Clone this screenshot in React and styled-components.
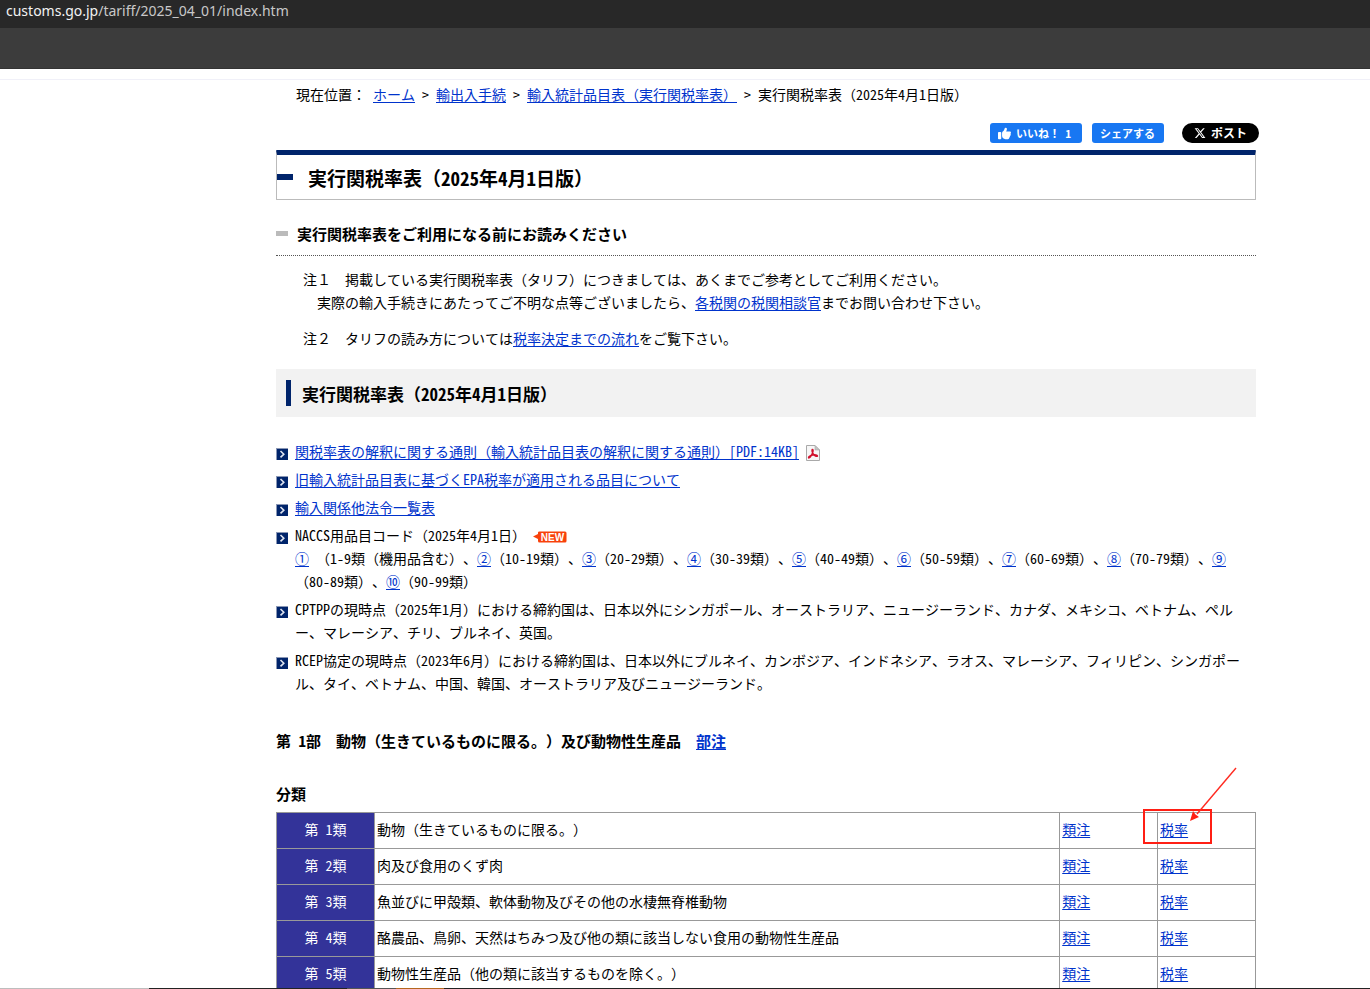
import styled, { createGlobalStyle } from "styled-components";
import { FaThumbsUp, FaXTwitter } from "react-icons/fa6";

const naccsCodes = [
  { mark: "②", range: "10-19類" },
  { mark: "③", range: "20-29類" },
  { mark: "④", range: "30-39類" },
  { mark: "⑤", range: "40-49類" },
  { mark: "⑥", range: "50-59類" },
  { mark: "⑦", range: "60-69類" },
  { mark: "⑧", range: "70-79類" },
  { mark: "⑨", range: "80-89類" },
];

const chapters = [
  { no: 1, name: "動物（生きているものに限る。）", marked: true },
  { no: 2, name: "肉及び食用のくず肉" },
  { no: 3, name: "魚並びに甲殻類、軟体動物及びその他の水棲無脊椎動物" },
  { no: 4, name: "酪農品、鳥卵、天然はちみつ及び他の類に該当しない食用の動物性生産品" },
  { no: 5, name: "動物性生産品（他の類に該当するものを除く。）" },
];

const ArrowBullet = () => (
  <BulletIcon viewBox="0 0 12 12" aria-hidden="true">
    <rect width="12" height="12" fill="#8a97b5" />
    <rect x="1" y="1" width="11" height="11" fill="#00246b" />
    <path d="M4.5 3 L7.8 6.2 L4.5 9.4" fill="none" stroke="#dfe4ef" strokeWidth="1.6" />
  </BulletIcon>
);

const PdfIcon = () => (
  <InlineIcon $width={14} $height={16} viewBox="0 0 14 16" aria-label="PDF">
    <path d="M0.5 0.5 H9 L13.5 5 V15.5 H0.5 Z" fill="#f7f7f7" stroke="#a9a9a9" />
    <path d="M9 0.5 V5 H13.5 Z" fill="#c4c4c4" stroke="#a9a9a9" strokeWidth="0.6" />
    <path
      d="M6.3 4.4 C7.6 4.2 7 7 6.2 8.8 C5.2 11 3.8 12.9 2.8 12.9 C1.8 12 4.4 10.6 6.6 10.1 C8.8 9.6 11.6 9.8 11.4 11 C10.8 12 8.4 10.6 7.3 9 C6.2 7.3 5.6 4.8 6.3 4.4 Z"
      fill="none"
      stroke="#d2122e"
      strokeWidth="1.5"
    />
  </InlineIcon>
);

const NewIcon = () => (
  <InlineIcon $width={34} $height={12} viewBox="0 0 34 12" aria-label="NEW">
    <path d="M0 5.5 L5 3 V1.5 Q5 0.5 6.5 0.5 H32 Q33.5 0.5 33.5 2 V10 Q33.5 11.5 32 11.5 H6.5 Q5 11.5 5 10 V8 Z" fill="#f8410a" />
    <text x="19.5" y="9.6" textAnchor="middle" fontFamily="Liberation Sans, sans-serif" fontSize="10" fontWeight="700" fill="#fff">
      NEW
    </text>
  </InlineIcon>
);

const App = () => {
  return (
    <Window lang="ja">
      <GlobalStyle />
      <AddressBar>
        <span>customs.go.jp</span>/tariff/2025_04_01/index.htm
      </AddressBar>
      <Toolbar />
      <Page>
        <Content>
          <Breadcrumb aria-label="現在位置">
            現在位置： <a href="#home">ホーム</a> &gt; <a href="#procedures">輸出入手続</a> &gt;{" "}
            <a href="#tariff">輸入統計品目表（実行関税率表）</a> &gt; 実行関税率表（2025年4月1日版）
          </Breadcrumb>
          <Social>
            <LikeButton type="button">
              <FaThumbsUp />
              いいね！ 1
            </LikeButton>
            <ShareButton type="button">シェアする</ShareButton>
            <PostLink href="#post">
              <FaXTwitter />
              ポスト
            </PostLink>
          </Social>
          <PageTitle>実行関税率表（2025年4月1日版）</PageTitle>
          <NoticeTitle>実行関税率表をご利用になる前にお読みください</NoticeTitle>
          <Note>
            注１　掲載している実行関税率表（タリフ）につきましては、あくまでご参考としてご利用ください。
            <br />
            {"　実際の輸入手続きにあたってご不明な点等ございましたら、"}
            <a href="#counselor">各税関の税関相談官</a>までお問い合わせ下さい。
          </Note>
          <Note>
            注２　タリフの読み方については<a href="#flow">税率決定までの流れ</a>をご覧下さい。
          </Note>
          <SectionTitle>実行関税率表（2025年4月1日版）</SectionTitle>
          <LinkList>
            <li>
              <ArrowBullet />
              <div>
                <a href="#rules">関税率表の解釈に関する通則（輸入統計品目表の解釈に関する通則）[PDF:14KB]</a> <PdfIcon />
              </div>
            </li>
            <li>
              <ArrowBullet />
              <div>
                <a href="#epa">旧輸入統計品目表に基づくEPA税率が適用される品目について</a>
              </div>
            </li>
            <li>
              <ArrowBullet />
              <div>
                <a href="#laws">輸入関係他法令一覧表</a>
              </div>
            </li>
            <li>
              <ArrowBullet />
              <div>
                NACCS用品目コード（2025年4月1日） <NewIcon />
                <br />
                <a href="#naccs1">①</a> （1-9類（機用品含む）、
                {naccsCodes.map(({ mark, range }) => (
                  <span key={mark}>
                    <a href={`#naccs${range}`}>{mark}</a>（{range}）、
                  </span>
                ))}
                <a href="#naccs10">⑩</a>（90-99類）
              </div>
            </li>
            <li>
              <ArrowBullet />
              <div>
                CPTPPの現時点（2025年1月）における締約国は、日本以外にシンガポール、オーストラリア、ニュージーランド、カナダ、メキシコ、ベトナム、ペルー、マレーシア、チリ、ブルネイ、英国。
              </div>
            </li>
            <li>
              <ArrowBullet />
              <div>
                RCEP協定の現時点（2023年6月）における締約国は、日本以外にブルネイ、カンボジア、インドネシア、ラオス、マレーシア、フィリピン、シンガポール、タイ、ベトナム、中国、韓国、オーストラリア及びニュージーランド。
              </div>
            </li>
          </LinkList>
          <PartTitle>
            第 1部　動物（生きているものに限る。）及び動物性生産品　<a href="#part1">部注</a>
          </PartTitle>
          <ChapterTable>
            <caption>分類</caption>
            <tbody>
              {chapters.map(({ no, name, marked }) => (
                <tr key={no}>
                  <th scope="row">第 {no}類</th>
                  <td>{name}</td>
                  <td>
                    <a href={`#note${no}`}>類注</a>
                  </td>
                  <td>
                    <a href={`#rate${no}`}>税率</a>
                    {marked && (
                      <Marker viewBox="0 0 94 78" aria-hidden="true">
                        <rect x="1" y="43" width="67" height="33" fill="none" stroke="#ff1f14" strokeWidth="2" />
                        <path d="M93 1 L54 47" stroke="#ff2a20" strokeWidth="1.4" />
                        <path d="M47 54 L50 44 L52.5 47.5 L56 50 Z" fill="#ff1f14" />
                      </Marker>
                    )}
                  </td>
                </tr>
              ))}
            </tbody>
          </ChapterTable>
        </Content>
      </Page>
      <BottomEdge>
        <Edge $grow={149} $color="#bdbdbd" />
        <Edge $grow={198} $color="#222" />
        <Edge $grow={49} $color="#555" />
        <Edge $grow={48} $color="#b4671f" />
        <Edge $grow={926} $color="#222" />
      </BottomEdge>
    </Window>
  );
};

const GlobalStyle = createGlobalStyle`
  * {
    box-sizing: border-box;
  }

  body {
    margin: 0;
    background: #fff;
    color: #000;
    font-family: "Noto Sans Mono CJK JP", "Noto Sans CJK JP", sans-serif;
    font-size: 14px;
    line-height: 23px;
    text-spacing-trim: space-all;
    text-autospace: no-autospace;
  }

  a {
    color: #0033cc;
    text-underline-offset: 2px;
  }
`;

const Window = styled.div`
  height: 100vh;
  display: flex;
  flex-direction: column;
`;

const AddressBar = styled.div`
  flex-shrink: 0;
  height: 28px;
  padding: 0 6px;
  background: #282828;
  color: #c8c8c8;
  font-family: "Noto Sans", sans-serif;
  font-size: 14px;
  line-height: 22px;

  span {
    color: #f2f2f2;
  }
`;

const Toolbar = styled.div`
  flex-shrink: 0;
  height: 41px;
  background: #3c3c3c;
  border-bottom: 1px solid #333;
`;

const Page = styled.div`
  flex: 1;
  min-height: 0;
  margin-top: 10px;
  border-top: 1px solid #f0f0f8;
  overflow-y: auto;
  scrollbar-width: none;
`;

const Content = styled.main`
  padding: 3px 114px 40px 276px;
`;

const Breadcrumb = styled.nav`
  padding-left: 20px;
`;

const Social = styled.div`
  display: flex;
  justify-content: flex-end;
  gap: 10px;
  margin: 17px -3px 7px 0;
`;

const LikeButton = styled.button`
  display: flex;
  align-items: center;
  gap: 5px;
  height: 20px;
  padding: 0 11px 0 8px;
  border: 0;
  border-radius: 3px;
  background: #1877f2;
  color: #fff;
  font-family: inherit;
  font-size: 11px;
  font-weight: 700;
  cursor: pointer;

  svg {
    font-size: 13px;
  }
`;

const ShareButton = styled(LikeButton)`
  margin-right: 8px;
  padding: 0 9px 0 8px;
`;

const PostLink = styled.a`
  display: flex;
  align-items: center;
  gap: 5px;
  height: 20px;
  padding: 0 12px 1px;
  border-radius: 10px;
  background: #000;
  color: #fff;
  font-size: 12px;
  font-weight: 700;
  text-decoration: none;
`;

const PageTitle = styled.h1`
  display: flex;
  align-items: center;
  gap: 15px;
  height: 50px;
  margin: 0;
  border: 1px solid #bbb;
  border-top: 5px solid #00246b;
  border-radius: 1px;
  font-size: 19px;
  font-weight: 700;

  &::before {
    content: "";
    width: 16px;
    height: 6px;
    background: #00246b;
  }
`;

const NoticeTitle = styled.h2`
  display: flex;
  align-items: center;
  gap: 9px;
  margin: 22px 0 12px;
  padding-bottom: 10px;
  border-bottom: 1px dotted #555;
  font-size: 15px;
  font-weight: 700;

  &::before {
    content: "";
    width: 12px;
    height: 5px;
    background: #bbb;
  }
`;

const Note = styled.p`
  margin: 0 0 13px;
  padding-left: 27px;
`;

const SectionTitle = styled.h2`
  display: flex;
  align-items: center;
  gap: 11px;
  height: 48px;
  margin: 19px 0 23px;
  padding-left: 10px;
  background: #f2f2f2;
  font-size: 17px;
  font-weight: 700;

  &::before {
    content: "";
    width: 5px;
    height: 26px;
    background: #00246b;
  }
`;

const LinkList = styled.ul`
  display: flex;
  flex-direction: column;
  gap: 5px;
  margin: 0;
  padding: 0;
  list-style: none;

  li {
    display: flex;
    gap: 7px;
  }
`;

const BulletIcon = styled.svg`
  flex-shrink: 0;
  width: 12px;
  height: 12px;
  margin-top: 8px;
`;

const InlineIcon = styled.svg`
  width: ${({ $width }) => $width}px;
  height: ${({ $height }) => $height}px;
  vertical-align: middle;
`;

const PartTitle = styled.h3`
  margin: 34px 0 30px;
  font-size: 15px;
  font-weight: 700;
`;

const ChapterTable = styled.table`
  width: 100%;
  table-layout: fixed;
  border-collapse: collapse;

  caption {
    padding-bottom: 7px;
    font-size: 15px;
    font-weight: 700;
    text-align: left;
  }

  th,
  td {
    position: relative;
    width: 10%;
    height: 36px;
    padding: 0 2px 2px;
    border: 1px solid #999;
    text-align: left;
  }

  th {
    background: #333399;
    color: #fff;
    font-weight: 400;
    text-align: center;
  }

  th + td {
    width: 70%;
  }
`;

/* red box and arrow drawn over the first rate link */
const Marker = styled.svg`
  position: absolute;
  left: -15px;
  bottom: 3px;
  width: 94px;
  height: 78px;
  pointer-events: none;
`;

const BottomEdge = styled.div`
  flex-shrink: 0;
  display: flex;
  height: 1px;
`;

const Edge = styled.div`
  flex: ${({ $grow }) => $grow} 0 0;
  background: ${({ $color }) => $color};
`;

export default App;
